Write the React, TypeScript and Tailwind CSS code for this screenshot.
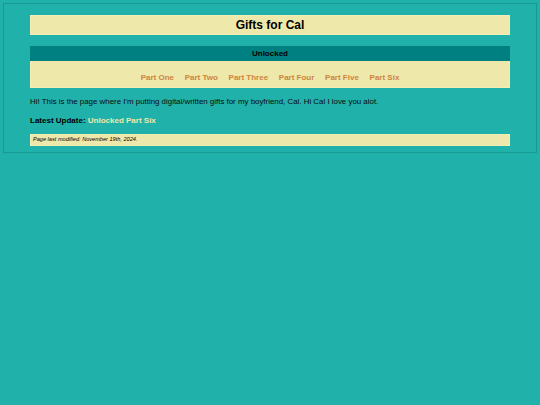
export default function App() {
  const parts = ["Part One", "Part Two", "Part Three", "Part Four", "Part Five", "Part Six"];
  return (
    <div className="min-h-[405px] bg-[#20b2aa] p-[3px] text-black" style={{ fontFamily: '"Liberation Sans", Arial, sans-serif' }}>
      <div className="border border-[#169a92] px-[26px] pt-[11px] pb-[6px]">
        <div className="flex h-[20px] items-center justify-center border border-[#f3eeb6] bg-[#eee8aa] text-[12px] font-bold leading-none">
          Gifts for Cal
        </div>
        <div className="mt-[11px] flex h-[15px] items-center justify-center bg-[#008080] text-[8px] font-bold leading-none">
          Unlocked
        </div>
        <div className="flex h-[27px] justify-center gap-[10.7px] border border-t-0 border-[#f3eeb6] bg-[#eee8aa] pt-[11px] text-[8px] font-bold leading-[12px] text-[#cd853f]">
          {parts.map((p) => (
            <a key={p} className="cursor-pointer">{p}</a>
          ))}
        </div>
        <p className="mt-[9px] text-[7.9px] leading-[9.2px] text-[#0a0a0a]">
          Hi! This is the page where I'm putting digital/written gifts for my boyfriend, Cal. Hi Cal I love you alot.
        </p>
        <p className="mt-[9.3px] text-[8px] font-bold leading-[9.2px]">
          Latest Update: <a className="text-[#eee8aa]">Unlocked Part Six</a>
        </p>
        <div className="mt-[9.3px] flex h-[12px] items-center border border-[#f3eeb6] bg-[#eee8aa] pl-[2px] text-[5.6px] italic leading-none">
          Page last modified: November 19th, 2024.
        </div>
      </div>
    </div>
  );
}
